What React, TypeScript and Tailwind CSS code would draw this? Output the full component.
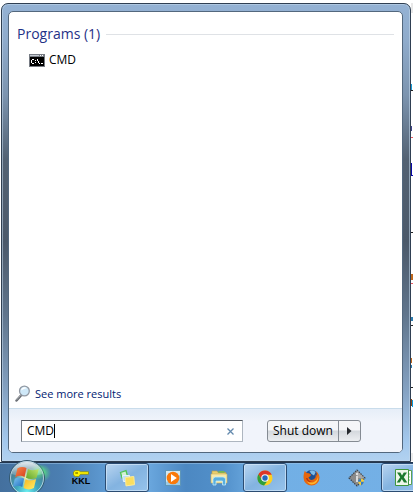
import { useState, type ReactNode } from "react";

interface TaskItem {
  id: string;
  label: string;
  open: boolean;
  icon: ReactNode;
}

function ConsoleIcon() {
  return (
    <svg width="16" height="13" viewBox="0 0 16 13" shapeRendering="crispEdges" aria-hidden="true">
      <rect width="16" height="13" fill="#777c84" />
      <rect x="1" y="1" width="9" height="1" fill="#c5cad2" />
      <rect x="11" y="1" width="1" height="1" fill="#fff" />
      <rect x="13" y="1" width="1" height="1" fill="#fff" />
      <rect x="1" y="3" width="14" height="9" fill="#000" />
      <path
        d="M3 5h2v1H3zM2 6h1v3H2zM3 9h2v1H3zM6 6h1v1H6zM6 8h1v1H6zM8 5h1v2H8zM9 7h1v2H9zM10 9h1v1h-1zM12 9h2v1h-2z"
        fill="#fff"
      />
    </svg>
  );
}

function MagnifierIcon() {
  return (
    <svg width="16" height="17" viewBox="0 0 16 17" aria-hidden="true">
      <path d="M1.5 15.5 6 10.5" stroke="#64686e" strokeWidth="2.4" strokeLinecap="round" />
      <path d="M1.5 15 5.5 10.5" stroke="#b9bcc1" strokeWidth="0.8" strokeLinecap="round" />
      <circle cx="9.4" cy="6" r="4.9" fill="#cfe8f8" stroke="#9299a3" strokeWidth="1.3" />
      <path d="M6 5.5a3.6 3.6 0 0 1 6-2.2c-2 .2-4.2 1-6 2.2z" fill="#fff" />
    </svg>
  );
}

function StartOrb() {
  return (
    <svg width="38" height="38" viewBox="0 0 38 38" className="overflow-visible" aria-hidden="true">
      <defs>
        <radialGradient id="orb" cx="50%" cy="90%" r="90%">
          <stop offset="0" stopColor="#6df0f2" />
          <stop offset="0.35" stopColor="#3fa6bd" />
          <stop offset="0.75" stopColor="#4b7f93" />
          <stop offset="1" stopColor="#9ab6c8" />
        </radialGradient>
        <radialGradient id="halo">
          <stop offset="0" stopColor="#5df27c" stopOpacity="0.9" />
          <stop offset="1" stopColor="#5df27c" stopOpacity="0" />
        </radialGradient>
        <radialGradient id="glow">
          <stop offset="0" stopColor="#fff6b0" stopOpacity="0.9" />
          <stop offset="1" stopColor="#fff6b0" stopOpacity="0" />
        </radialGradient>
        <linearGradient id="gloss" x1="0" y1="0" x2="0" y2="1">
          <stop offset="0" stopColor="#fff" stopOpacity="0.75" />
          <stop offset="1" stopColor="#fff" stopOpacity="0.15" />
        </linearGradient>
        <linearGradient id="flagRed" x1="0" y1="0" x2="1" y2="1">
          <stop offset="0" stopColor="#f58a4a" />
          <stop offset="1" stopColor="#d93b1d" />
        </linearGradient>
        <linearGradient id="flagGreen" x1="1" y1="0" x2="0" y2="1">
          <stop offset="0" stopColor="#c4e66c" />
          <stop offset="1" stopColor="#5da52c" />
        </linearGradient>
        <linearGradient id="flagBlue" x1="0" y1="0" x2="1" y2="1">
          <stop offset="0" stopColor="#7fc8f5" />
          <stop offset="1" stopColor="#1b69bb" />
        </linearGradient>
        <linearGradient id="flagYellow" x1="0" y1="0" x2="1" y2="1">
          <stop offset="0" stopColor="#f8b51f" />
          <stop offset="1" stopColor="#fff16a" />
        </linearGradient>
      </defs>
      <circle cx="34" cy="14" r="9" fill="url(#halo)" />
      <circle cx="19" cy="19" r="17.5" fill="url(#orb)" stroke="#345870" />
      <circle cx="30" cy="13" r="8" fill="url(#halo)" />
      <circle cx="19" cy="19" r="16.5" fill="none" stroke="#d7eaf2" strokeOpacity="0.7" />
      <path d="M3.5 15a16 16 0 0 1 31 0c-9 3-22 3-31 0z" fill="url(#gloss)" />
      <circle cx="18" cy="19" r="11" fill="url(#glow)" />
      <path d="M9.5 9.3c3.2-1.9 6.2-1.7 9-.2l-2 8.9c-2.9-1.5-5.9-1.6-9.3.2z" fill="url(#flagRed)" />
      <path d="M20 10c3.2 1.6 6.8 1.7 10.8-.2l-2.2 8.9c-3.6 1.7-7.3 1.6-10.6 0z" fill="url(#flagGreen)" />
      <path d="M6.8 19.8c3.4-1.9 6.6-1.8 9.4-.2l-2 8.3c-2.8-1.5-5.9-1.6-9.3.2z" fill="url(#flagBlue)" />
      <path d="M17.6 20.3c3.2 1.6 6.9 1.7 10.5-.2l-2.2 8.9c-3.5 2-7.2 1.7-10.4 0z" fill="url(#flagYellow)" />
    </svg>
  );
}

function KeyIcon() {
  return (
    <span className="flex flex-col items-center">
      <svg width="16" height="7" viewBox="0 0 16 7" aria-hidden="true">
        <path
          d="M2.2.5h3.6l1.7 1.2h8v2.6H7.5L5.8 6.5H2.2L.5 5V2z"
          fill="#fff200"
          stroke="#8d8a00"
          strokeWidth="0.7"
        />
        <path d="M2.3 3h2.7" stroke="#4d4d00" />
      </svg>
      <span className="font-['Liberation_Sans',Arial,sans-serif] text-[9px] leading-[9px] font-bold text-black">KKL</span>
    </span>
  );
}

function NotesIcon() {
  return (
    <svg width="18" height="18" viewBox="0 0 18 18" aria-hidden="true">
      <path d="m2.5 3.5 5.5-1.8L9.5 7 4 9z" fill="#d2f0d4" stroke="#4fc455" strokeWidth="1.3" />
      <path d="M4.5 6.5h7v6h-6z" fill="#bce0fa" stroke="#e4f3fd" />
      <path d="m7.3 8.500 8.500-1 .7 8.200-8.500 1.200z" fill="#fade5f" stroke="#fbeb9a" />
    </svg>
  );
}

function PlayerIcon() {
  return (
    <svg width="16" height="16" viewBox="0 0 16 16" aria-hidden="true">
      <rect x="0.5" y="0.5" width="15" height="15" fill="#9ccbe6" stroke="#5f96b8" />
      <path d="M1 1h14v4L1 12z" fill="#d2e9f5" />
      <circle cx="8" cy="8" r="6.3" fill="#f9790a" />
      <path d="m6 4 5.800 4L6 12z" fill="#fff" />
    </svg>
  );
}

function FolderIcon() {
  return (
    <svg width="18" height="17" viewBox="0 0 18 17" aria-hidden="true">
      <path d="M2 2h5l1 1.500h8v10H2z" fill="#e9cf6e" stroke="#b99b43" strokeWidth="0.6" />
      <path d="M8.500 2h6v1.800h-6z" fill="#75b855" />
      <path d="M1 5h16v9H1z" fill="#f8e9a5" stroke="#cbb05a" strokeWidth="0.6" />
      <path d="M3 16v-5.500Q3 8 5.500 8h7.500q2.500 0 2.500 2.500V16h-3v-4H6v4z" fill="#58aede" stroke="#c4ebfa" strokeWidth="0.8" />
    </svg>
  );
}

function ChromeIcon() {
  return (
    <svg width="16" height="16" viewBox="0 0 16 16" aria-hidden="true">
      <circle cx="8" cy="8" r="7.5" fill="#fbd022" />
      <path d="M1.4 4.3A7.5 7.5 0 0 1 14.800 4.800H8L4.700 9.500z" fill="#dd3527" />
      <path d="M1.4 4.3 5 10l5 1.500-3 4A7.500 7.500 0 0 1 1.400 4.300z" fill="#2f9e3b" />
      <circle cx="8" cy="8" r="3.8" fill="#eef5fb" />
      <circle cx="8" cy="8" r="2.7" fill="#2468bd" />
    </svg>
  );
}

function FirefoxIcon() {
  return (
    <svg width="17" height="17" viewBox="0 0 17 17" aria-hidden="true">
      <circle cx="8.5" cy="8" r="7" fill="#1d4f93" />
      <path d="M6.5 2c2.500-1.300 5-.5 6 1.500L11 6.500 8.500 5z" fill="#7fbbe6" />
      <path
        d="M1.8 1.8 3.6 4 6 4.200l2.200 1.600L7 7.500l-1.500.7C6 10 7.500 11.200 9.500 10.800c2.300-.5 3.800-2.800 3-5.300.8.3 1.300 1.500 1.300 1.500.2-2-.3-3.800-1.300-5 2.500 1.500 4 4 4 6.500a8 8 0 0 1-16 0C.5 6 1 4 1.800 1.800z"
        fill="#e8660c"
      />
      <path d="M14.5 4c1.500 4-.5 8-4 9.200-2.500.8-5 .2-6.500-1.200 1 2.500 3.500 3.800 6 3.300 4.500-.8 6.500-6.300 4.500-11.300z" fill="#fbb62e" />
      <path d="M3 9c1 3.500 3.500 4.500 6.500 4C6.500 12.500 5 11 4.500 9z" fill="#b83310" />
    </svg>
  );
}

function InfoDiamondIcon() {
  return (
    <svg width="18" height="18" viewBox="0 0 18 18" aria-hidden="true">
      <path d="m9 1 8 8-8 8-8-8z" fill="#8a8a8a" />
      <path d="m9 1 8 8H9z" fill="#a8a8a8" />
      <path d="m9 1 8 8-8 8-8-8z" fill="none" stroke="#3f464e" strokeWidth="1.2" strokeDasharray="1.5 1" />
      <circle cx="9" cy="5" r="1.2" fill="#e3e3e3" />
      <path d="M8 7h2v6H8z" fill="#dcdcdc" />
      <path d="m13 9.500 3 1.200c0 2.800-.8 4.500-3 5.800-2.200-1.300-3-3-3-5.800z" fill="#f6ce36" />
      <path d="m13 9.500-3 1.200.1 2H13zM13 12.700v3.800c1.800-1.100 2.600-2.200 2.900-3.800z" fill="#347bc7" />
    </svg>
  );
}

function ExcelIcon() {
  return (
    <svg width="17" height="17" viewBox="0 0 17 17" aria-hidden="true">
      <path d="M7 1.500h9.500v14H7z" fill="#fff" stroke="#5aa253" />
      <path d="M12 5h3M12 8h3M12 11h3" stroke="#8cc683" />
      <path d="M.5.500h13v16H.5z" fill="#eef7ea" stroke="#3e963f" />
      <path d="m2 3.500h3.300l1.700 3 1.800-3H12L8.800 8.300l3.500 5.200H9L6.800 10l-2 3.500H1.700l3.500-5.200z" fill="#1c7a2e" />
    </svg>
  );
}

// Document behind the menu, of which only a thin strip shows.
function DocumentEdge() {
  return (
    <svg width="2" height="458" viewBox="0 0 2 458" shapeRendering="crispEdges" aria-hidden="true">
      <path d="M0 0h2v10H0z" fill="#e8e8e8" />
      <path d="M0 81h1v6H0z" fill="#159bd6" />
      <path d="M0 87h2v1H0zM0 229h2v1H0zM0 322h2v1H0zM0 384h2v1H0z" fill="#222" />
      <path d="M0 123h1v5H0z" fill="#44448c" />
      <path d="M0 134h2v1H0zM0 280h2v1H0z" fill="#e85a63" />
      <path d="M0 160h1v12H0zM0 172h2v1H0z" fill="#0a0aa8" />
      <path d="M0 271h2v6H0zM0 355h1v5H0z" fill="#bd671d" />
      <path d="M0 314h2v4H0zM0 362h1v3H0z" fill="#2f7cae" />
      <path d="M0 396h1v7H0z" fill="#8a4514" />
      <path d="M1 397h1v7H1z" fill="#0898dd" />
      <path d="M0 450h2v8H0z" fill="#ececec" />
    </svg>
  );
}

const TASK_ITEMS: TaskItem[] = [
  { id: "kkl", label: "KKL", open: false, icon: <KeyIcon /> },
  { id: "notes", label: "Sticky Notes", open: true, icon: <NotesIcon /> },
  { id: "player", label: "Media Player", open: false, icon: <PlayerIcon /> },
  { id: "explorer", label: "Explorer", open: false, icon: <FolderIcon /> },
  { id: "chrome", label: "Chrome", open: true, icon: <ChromeIcon /> },
  { id: "firefox", label: "Firefox", open: false, icon: <FirefoxIcon /> },
  { id: "info", label: "Information", open: false, icon: <InfoDiamondIcon /> },
  { id: "excel", label: "Excel", open: true, icon: <ExcelIcon /> },
];

export default function App() {
  const [query, setQuery] = useState("CMD");

  return (
    <div className="flex min-h-screen flex-col overflow-hidden bg-white font-['Open_Sans','Noto_Sans',sans-serif] text-[12px] leading-4 text-black">
      <div className="flex flex-1 bg-white pt-[3px] pl-px">
        <main className="flex flex-1 flex-col rounded-t-[7px] border border-[#2f3f52] bg-[linear-gradient(to_bottom,#94b2d4_0%,#8fabcb_8%,#7c94af_20%,#536273_34%,#4b596a_52%,#60758c_68%,#83a0c0_84%,#a4c9ee_96%,#b2d2f0_100%)] pt-[7px] pr-[7px] pb-2 pl-1.5 shadow-[inset_0_0_0_1px_#c3d8ec90]">
          <div className="flex flex-1 flex-col overflow-hidden rounded-[5px] border border-[#53687e] bg-white">
            <section className="flex flex-1 flex-col">
              <div className="flex items-center gap-1.5 pt-3 pr-2 pl-2">
                <h1 className="text-[14px] leading-5 text-[#1f3287]">Programs (1)</h1>
                <span className="h-px flex-1 bg-[#dfe2e6]" />
              </div>
              <button type="button" className="mt-2 flex items-center gap-1 self-start pl-5 text-left">
                <ConsoleIcon />
                CMD
              </button>
              <a href="#results" className="mt-auto mb-1.5 flex items-center gap-1 self-start pl-1.5 text-[11px] text-[#001a72]">
                <MagnifierIcon />
                See more results
              </a>
            </section>
            <footer className="flex items-center gap-6 border-t border-[#c9dceb] bg-linear-to-b from-[#e6eef8] to-[#f1f4fb] to-30% pt-[11px] pr-[41px] pb-[10px] pl-3">
              <div className="flex h-[22px] min-w-0 flex-1 items-center border border-[#aeb6c0] border-t-[#50565e] border-l-[#777e87] bg-white pr-2 pl-[5px]">
                <input
                  aria-label="Search programs and files"
                  value={query}
                  onChange={(e) => setQuery(e.target.value)}
                  autoFocus
                  className="max-w-[180px] bg-transparent caret-transparent outline-none [field-sizing:content]"
                />
                <span className="h-3.5 w-px bg-black" />
                <button type="button" aria-label="Clear search" className="ml-auto" onClick={() => setQuery("")}>
                  <svg width="7" height="7" viewBox="0 0 7 7" aria-hidden="true">
                    <path d="m.5.500 6 6m0-6-6 6" stroke="#6389ad" strokeWidth="1.3" />
                  </svg>
                </button>
              </div>
              <div className="flex h-[22px] overflow-hidden rounded-[3px] border border-[#858b93] bg-linear-to-b from-[#f5f6f8] from-45% via-[#d4d8dd] via-50% to-[#eceef1]">
                <button type="button" className="w-[71px] border-r border-[#858b93] whitespace-nowrap">
                  Shut down
                </button>
                <button type="button" aria-label="Shut down options" className="flex w-[21px] items-center justify-center">
                  <svg width="5" height="8" viewBox="0 0 5 8" aria-hidden="true">
                    <path d="M0 0v8l4.500-4z" fill="#25282d" />
                  </svg>
                </button>
              </div>
            </footer>
          </div>
        </main>
        <div className="w-0.5 shrink-0 overflow-hidden">
          <DocumentEdge />
        </div>
      </div>

      <nav
        aria-label="Taskbar"
        className="flex h-[30px] shrink-0 items-center gap-0.5 border-t border-[#22364f] bg-[linear-gradient(to_right,#44709e_0%,#4b7fb2_15%,#609dd6_27%,#6aa7de_36%,#4c88c2_45%,#5290ca_54%,#71afe5_63%,#74b0e6_100%)] shadow-[inset_0_1px_0_#9cc2e590]"
      >
        <button type="button" aria-label="Start" className="-my-2 mr-[11px] ml-2 shrink-0">
          <StartOrb />
        </button>
        {TASK_ITEMS.map((item) => (
          <button
            key={item.id}
            type="button"
            aria-label={item.label}
            className={`flex h-[29px] w-11 shrink-0 items-center justify-center ${
              item.open
                ? "rounded-[3px] border border-[#2b4c72] bg-linear-to-br from-[#b9d5f0] via-[#83b3e0] to-[#96c3ec] shadow-[inset_0_0_0_1px_#d5e8f9b0]"
                : ""
            }`}
          >
            {item.icon}
          </button>
        ))}
      </nav>
    </div>
  );
}
